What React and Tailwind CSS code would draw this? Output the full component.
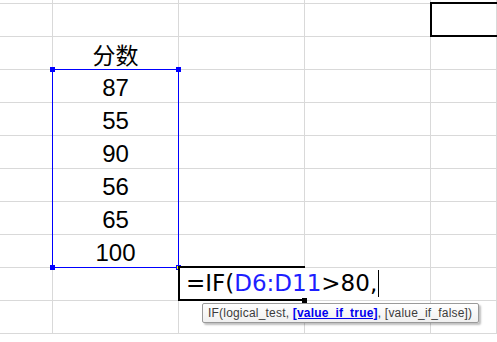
import React from 'react'

const ROWS = 10
const COLS = 5
const GRID = 'grid grid-cols-[53px_126px_126px_126px_66px] grid-rows-[4px_repeat(10,33px)] [grid-area:1/1]'

const VALUES = {
  1: '分数',
  2: '87',
  3: '55',
  4: '90',
  5: '56',
  6: '65',
  7: '100',
}

function Cell({ row, col }) {
  const text = col === 1 ? VALUES[row] : null
  const isHeader = row === 1
  return (
    <div className="border-r border-b border-[#d9d9d9] flex items-center justify-center">
      {text && (
        <span
          className={
            isHeader
              ? "text-[23px] leading-none text-black font-['Noto_Sans_CJK_SC',sans-serif] pt-[2px]"
              : "text-[24px] leading-none text-black font-['Liberation_Sans',Arial,sans-serif] pt-[4px]"
          }
        >
          {text}
        </span>
      )}
    </div>
  )
}

function Handle({ className }) {
  return <span className={`absolute w-[5px] h-[5px] bg-[#0000ff] ${className}`} />
}

export default function App() {
  const cells = []
  for (let c = 0; c < COLS; c++) {
    cells.push(<div key={`t-${c}`} className="border-r border-b border-[#d9d9d9]" />)
  }
  for (let r = 0; r < ROWS; r++) {
    for (let c = 0; c < COLS; c++) {
      cells.push(<Cell key={`${r}-${c}`} row={r} col={c} />)
    }
  }

  return (
    <div className="w-[497px] h-[342px] overflow-hidden bg-white grid">
      {/* sheet cells */}
      <div className={GRID}>{cells}</div>

      {/* overlays sharing the same grid tracks */}
      <div className={`${GRID} pointer-events-none`}>
        {/* top-right active box */}
        <div className="col-start-5 row-start-2 -ml-px -mt-[2px] -mr-[20px] border-2 border-black" />

        {/* selected range */}
        <div className="relative col-start-2 row-start-4 row-span-6 -ml-px -mt-px border border-[#0000ff]">
          <Handle className="-left-[3px] -top-[3px]" />
          <Handle className="-right-[3px] -top-[3px]" />
          <Handle className="-left-[3px] -bottom-[3px]" />
          <span className="absolute -right-[3px] -bottom-[3px] w-[5px] h-[5px] bg-[#ffff00] border border-[#0000ff]" />
        </div>

        {/* cell being edited */}
        <div className="relative col-start-3 row-start-10 -ml-px -mt-[2px] h-[35px] flex">
          <div className="flex items-center w-full pl-[2px] border-l-2 border-y-2 border-black bg-white">
            <span className="flex items-center h-full bg-white pl-[4px] pr-[3px] whitespace-nowrap">
              <span className="text-[23px] leading-none text-black font-['DejaVu_Sans',sans-serif]">
                =IF(<span className="text-[#1e1eff]">D6:D11</span>&gt;80,
              </span>
              <span className="w-px h-[27px] bg-black ml-px" />
            </span>
          </div>
          <span className="absolute right-[-2px] -bottom-[2px] w-[5px] h-[5px] bg-black" />

          {/* function tooltip */}
          <div className="absolute left-[24px] top-[37px] w-[277px] h-[20px] rounded-[2px] border border-[#9a9a9a] bg-gradient-to-b from-white to-[#f0f0f0] shadow-[2px_2px_2px_rgba(0,0,0,0.25)] flex items-center px-[5px]">
            <span className="text-[12px] tracking-[0.2px] leading-none text-[#3c3c3c] font-['Liberation_Sans',Arial,sans-serif] whitespace-nowrap">
              IF(logical_test, <span className="font-bold text-[#0000ee] underline">[value_if_true]</span>, [value_if_false])
            </span>
          </div>
        </div>
      </div>
    </div>
  )
}
